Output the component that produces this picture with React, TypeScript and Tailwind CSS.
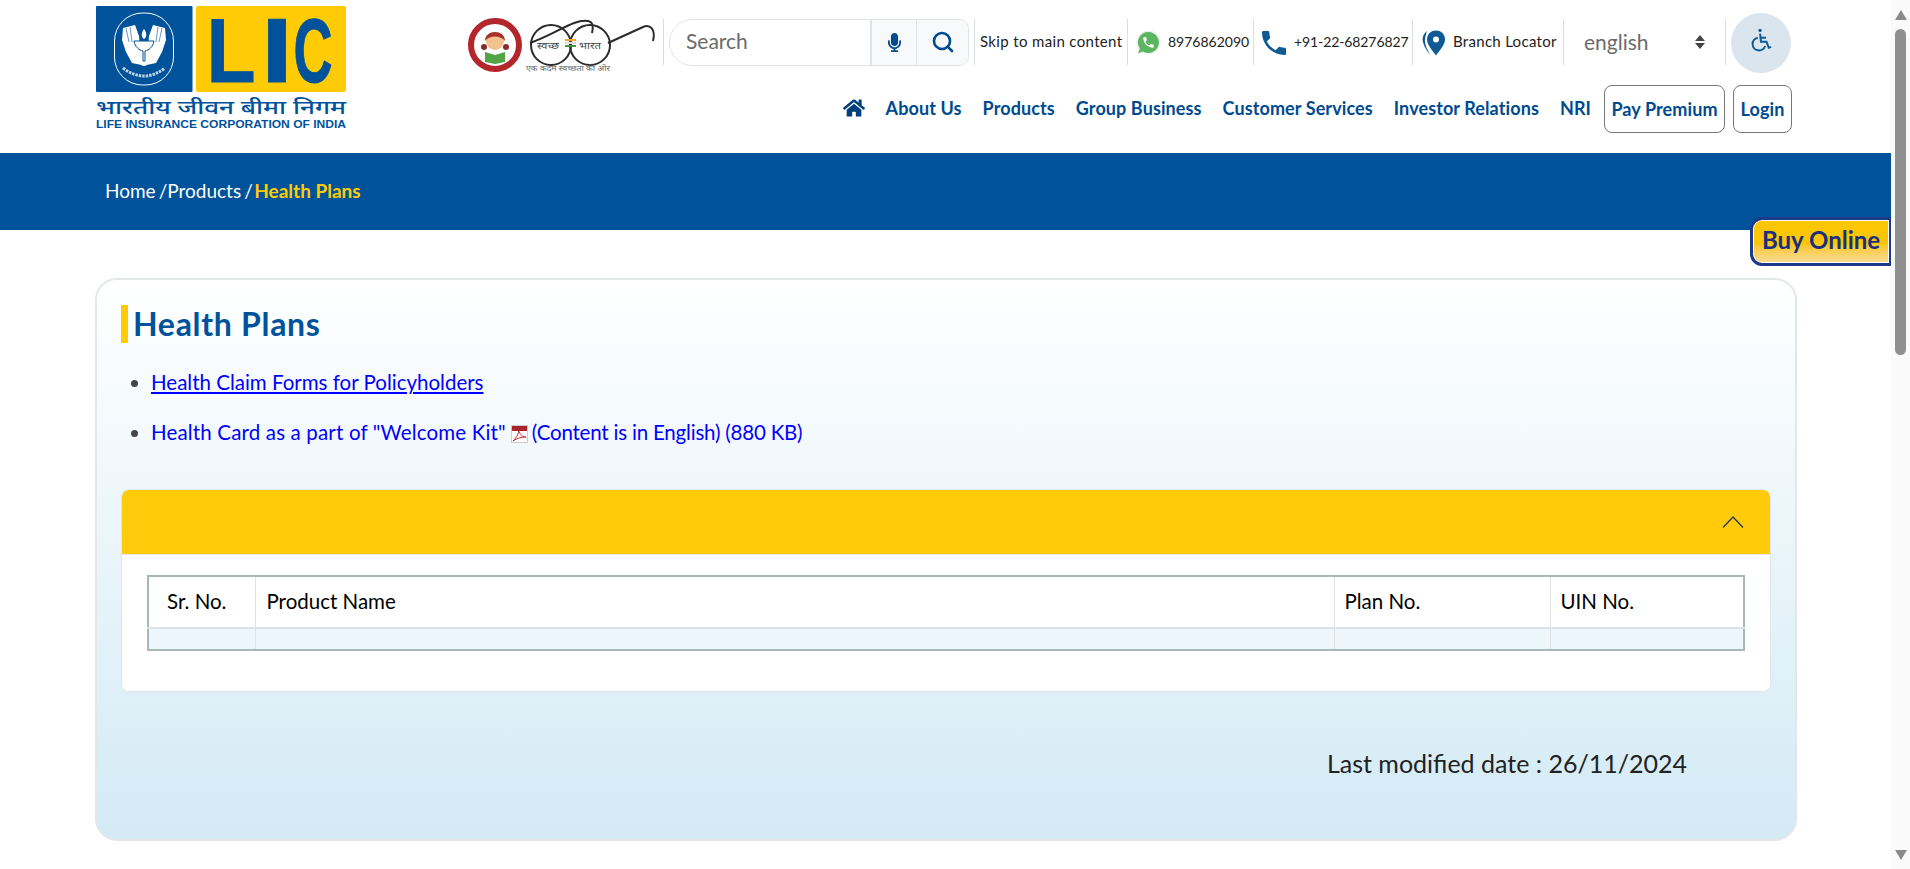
import { FaHome, FaMicrophone } from 'react-icons/fa';
import { Search } from 'lucide-react';

const FONT = "font-['Lato','Noto_Sans',sans-serif]";

const Divider = () => <div className="w-px h-[46px] mb-[2px] bg-[#dedede] shrink-0" />;

const PHONE = "M6.62 10.79c1.44 2.83 3.76 5.14 6.59 6.59l2.2-2.2c.27-.27.67-.36 1.02-.24 1.12.37 2.33.57 3.57.57.55 0 1 .45 1 1V20c0 .55-.45 1-1 1-9.39 0-17-7.61-17-17 0-.55.45-1 1-1h3.5c.55 0 1 .45 1 1 0 1.25.2 2.45.57 3.57.11.35.03.74-.25 1.02l-2.2 2.2z";

function LicLogo() {
  return (
    <svg viewBox="94 0 254 135" className="w-[254px] h-[135px] shrink-0">
      <rect x="96" y="6" width="96.500" height="86" fill="#00529b" rx="1" />
      <rect x="196" y="6" width="150" height="86" fill="#ffcb05" rx="2" />
      <rect x="114.500" y="13" width="59" height="72" rx="28" fill="none" stroke="#fff" strokeWidth="1" />
      <path d="M122 40 L123 28 L135 25 L139 36 L140 47 L148 57 L146 66 L132 63 L126 52 Z" fill="#fff" />
      <path d="M166 40 L165 28 L153 25 L149 36 L148 47 L140 57 L142 66 L156 63 L162 52 Z" fill="#fff" />
      <path d="M126 28 L129 42 M130 27 L132 42 M162 28 L159 42 M158 27 L156 42" stroke="#00529b" strokeWidth="0.6" fill="none" />
      <path d="M144 29 C147 33 147 37 144 39 C141 37 141 33 144 29 Z" fill="#fff" />
      <path d="M134 41 H154 C153 47 149 50 145 51 V61 H143 V51 C139 50 135 47 134 41 Z" fill="#fff" stroke="#00529b" strokeWidth="1" />
      <path d="M123 68 Q144 84 165 68" fill="none" stroke="#fff" strokeWidth="3" strokeDasharray="2.500 1" opacity="0.75" />
      <text x="206.500" y="82" fontFamily="Liberation Sans" fontWeight="700" fontSize="91" fill="#00529b" stroke="#00529b" strokeWidth="1" textLength="49" lengthAdjust="spacingAndGlyphs">L</text>
      <text x="261" y="82" fontFamily="Liberation Sans" fontWeight="700" fontSize="91" fill="#00529b" stroke="#00529b" strokeWidth="1" textLength="32" lengthAdjust="spacingAndGlyphs">I</text>
      <text x="293.500" y="82" fontFamily="Liberation Sans" fontWeight="700" fontSize="91" fill="#00529b" stroke="#00529b" strokeWidth="1" textLength="39" lengthAdjust="spacingAndGlyphs">C</text>
      <text x="96" y="114" fontFamily="Noto Sans, sans-serif" fontWeight="500" fontSize="19" fill="#00529b" textLength="250" lengthAdjust="spacingAndGlyphs">भारतीय जीवन बीमा निगम</text>
      <text x="96" y="127.500" fontFamily="Liberation Sans" fontWeight="700" fontSize="10.500" fill="#00529b" textLength="250" lengthAdjust="spacingAndGlyphs">LIFE INSURANCE CORPORATION OF INDIA</text>
    </svg>
  );
}

function SwachhLogo() {
  return (
    <svg viewBox="465 5 200 70" className="w-[200px] h-[70px] shrink-0">
      <circle cx="497" cy="42" r="24" fill="#fff" stroke="#b3262b" strokeWidth="6" />
      <circle cx="497" cy="38" r="9" fill="#f3c18e" />
      <path d="M487 38 C487 26 507 26 507 38 C503 32 491 32 487 38 Z" fill="#a8322a" />
      <circle cx="486" cy="44" r="3" fill="#8a2c2c" />
      <circle cx="508" cy="44" r="3" fill="#8a2c2c" />
      <path d="M487 49 L497 52 L507 49 V59 L497 61 L487 59 Z" fill="#52a447" />
      <circle cx="553" cy="42" r="20" fill="none" stroke="#2b2b2b" strokeWidth="2" />
      <circle cx="592" cy="42" r="20" fill="none" stroke="#2b2b2b" strokeWidth="2" />
      <path d="M532 40 C560 30 575 16 590 18 C596 19 595 26 594 30" fill="none" stroke="#2b2b2b" strokeWidth="2" />
      <path d="M610 40 L645 24 C652 21 658 26 655 38" fill="none" stroke="#2b2b2b" strokeWidth="2" />
      <rect x="567" y="36" width="11" height="2" fill="#f4a62a" />
      <rect x="567" y="39" width="11" height="2" fill="#ddd" />
      <rect x="567" y="42" width="11" height="2" fill="#3f9a3f" />
      <text x="539" y="46" fontFamily="Noto Sans, sans-serif" fontSize="9" fill="#444" textLength="22" lengthAdjust="spacingAndGlyphs">स्वच्छ</text>
      <text x="581" y="46" fontFamily="Noto Sans, sans-serif" fontSize="9" fill="#444" textLength="22" lengthAdjust="spacingAndGlyphs">भारत</text>
      <text x="528" y="68" fontFamily="Noto Sans, sans-serif" fontSize="7.500" fill="#666" textLength="84" lengthAdjust="spacingAndGlyphs">एक कदम स्वच्छता की ओर</text>
    </svg>
  );
}

function WhatsAppIcon() {
  return (
    <svg viewBox="0 0 26 26" className="w-[26px] h-[26px] shrink-0">
      <circle cx="13.500" cy="12.500" r="12" fill="#efefef" />
      <path d="M13.500 2 A10.500 10.500 0 1 1 8 21.500 L3 23.500 L4.800 18.500 A10.500 10.500 0 0 1 13.500 2 Z" fill="#5eb55f" />
      <path d={PHONE} fill="#fff" transform="translate(6.500 5.500) scale(0.58)" />
    </svg>
  );
}

function PinIcon() {
  return (
    <svg viewBox="0 0 23 26" className="w-[23px] h-[26px] shrink-0">
      <path d="M5 1 C1 4 0 8 1 12 C2 17 6 22 8 25 C5 19 3 15 3 11 C3 7 4 4 5 1 Z" fill="#0f5a94" />
      <path d="M14 0.500 C8 0.500 5 5 5 9.500 C5 15 11 21 14 25.500 C17 21 23 15 23 9.500 C23 5 20 0.500 14 0.500 Z" fill="#0f5a94" />
      <circle cx="14" cy="9.500" r="3" fill="#fff" />
    </svg>
  );
}

function WheelchairIcon() {
  return (
    <svg viewBox="0 0 24 26" className="w-[22px] h-[24px]" fill="none" stroke="#0f5a94" strokeWidth="2.200">
      <circle cx="11" cy="2.500" r="1.800" fill="#0f5a94" stroke="none" />
      <path d="M11 6 L12 15 H18 L20.500 21.500 L23 20.500" />
      <path d="M12 10.500 H17.500" />
      <path d="M8.500 10.500 A7 7 0 1 0 16.500 19.500" />
    </svg>
  );
}

function PdfIcon() {
  return (
    <svg viewBox="0 0 17 18" className="w-[17px] h-[18px] inline-block align-[-3px] ml-[5px] mr-[4px]">
      <rect x="0.500" y="0.500" width="16" height="17" fill="#fff" stroke="#ccc" />
      <rect x="1" y="1" width="15" height="5" fill="#a8242a" />
      <path d="M2 16 C6 12 8 8 7.500 5 C9 10 12 12 15 12 C11 12 6 13 2 16 Z" fill="none" stroke="#c8282e" strokeWidth="1" />
    </svg>
  );
}

function Scrollbar() {
  return (
    <div className="w-[19px] shrink-0 h-full bg-[#fafafa] flex flex-col items-center">
      <div className="mt-[10px] w-0 h-0 border-x-[6px] border-x-transparent border-b-[10px] border-b-[#8a8a8a]" />
      <div className="mt-[9px] w-[11px] h-[326px] rounded-full bg-[#8f8f8f]" />
      <div className="mt-auto mb-[9px] w-0 h-0 border-x-[6px] border-x-transparent border-t-[10px] border-t-[#8a8a8a]" />
    </div>
  );
}

function TopRow() {
  return (
    <div className="mt-[13px] h-[60px] flex items-center justify-end">
      <SwachhLogo />
      <Divider />
      <div className="ml-[5px] mb-[2px] w-[300px] h-[47px] flex border border-[#dfe3e8] rounded-l-[24px] rounded-r-[10px] overflow-hidden">
        <div className="flex-1 pl-[16px] pb-[2px] flex items-center text-[21px] text-[#6b6b6b]">Search</div>
        <div className="w-[46px] border-l-2 border-[#dfe3e8] bg-[#f8f9fa] flex items-center justify-center text-[#004a8f]">
          <FaMicrophone size={19} />
        </div>
        <div className="w-[52px] border-l border-[#dfe3e8] bg-[#f8f9fa] flex items-center justify-center text-[#004a8f]">
          <Search size={24} strokeWidth={2.6} />
        </div>
      </div>
      <div className="ml-[5px]"><Divider /></div>
      <div className="w-[152px] pl-[5px] pb-[3px] text-[15px] text-[#222] tracking-[0.35px] whitespace-nowrap">Skip to main content</div>
      <Divider />
      <div className="w-[125px] pl-[7px] flex items-center gap-[7px] text-[14px] text-[#222]">
        <WhatsAppIcon />
        <span className="pb-[3px]">8976862090</span>
      </div>
      <Divider />
      <div className="w-[158px] pl-[8px] flex items-center gap-[8px] text-[14px] text-[#222] tracking-[-0.1px] whitespace-nowrap">
        <svg viewBox="3 3 18 18" className="w-[24px] h-[24px] shrink-0"><path d={PHONE} fill="#0f5a94" /></svg>
        <span className="pb-[3px]">+91-22-68276827</span>
      </div>
      <Divider />
      <div className="w-[150px] pl-[9px] flex items-center gap-[8px] text-[15px] text-[#222] tracking-[0.3px] whitespace-nowrap">
        <PinIcon />
        <span className="pb-[3px]">Branch Locator</span>
      </div>
      <Divider />
      <div className="w-[161px] pl-[20px] pr-[20px] flex items-center justify-between text-[21px] text-[#6b6b6b]">
        <span className="pb-[3px]">english</span>
        <span className="flex flex-col gap-[2px] mb-[2px]">
          <span className="w-0 h-0 border-x-[5px] border-x-transparent border-b-[6px] border-b-[#444]" />
          <span className="w-0 h-0 border-x-[5px] border-x-transparent border-t-[6px] border-t-[#444]" />
        </span>
      </div>
      <Divider />
      <div className="ml-[5px] w-[60px] h-[60px] rounded-full bg-[#dbe5ee] flex items-center justify-center pb-[7px]">
        <WheelchairIcon />
      </div>
    </div>
  );
}

function NavRow() {
  const items = ['About Us', 'Products', 'Group Business', 'Customer Services', 'Investor Relations', 'NRI'];
  return (
    <div className="mt-[12px] h-[48px] flex items-center justify-end gap-[21px] text-[18px] font-bold text-[#004a8f] tracking-[0.1px]">
      <FaHome size={22} className="text-[#003f7d] mb-[2px]" />
      {items.map((item) => (
        <span key={item} className="whitespace-nowrap pb-[2px]">{item}</span>
      ))}
      <div className="-ml-[8px] -mr-[1px] flex gap-[8px]">
        <div className="w-[121px] h-[48px] border border-[#777] rounded-[8px] flex items-center justify-center">Pay Premium</div>
        <div className="w-[59px] h-[48px] border border-[#777] rounded-[8px] flex items-center justify-center">Login</div>
      </div>
    </div>
  );
}

export default function App() {
  return (
    <div className={`flex h-[869px] overflow-hidden bg-white ${FONT}`}>
      <div className="relative flex-1 min-w-0">
        <header className="h-[153px] flex justify-between pl-[94px] pr-[100px]">
          <LicLogo />
          <div>
            <TopRow />
            <NavRow />
          </div>
        </header>

        <div className="h-[77px] bg-[#00529b] flex items-center pl-[105px] text-[19px] text-white">
          <span>Home</span>
          <span className="ml-[3px]">/</span>
          <span>Products</span>
          <span className="ml-[3px] mr-[1.5px]">/</span>
          <span className="font-bold text-[#ffcb05]">Health Plans</span>
        </div>

        <div className="absolute right-0 top-[217px] w-[141px] h-[49px] border-[3px] border-r-2 border-[#1c3a8a] rounded-l-[12px] bg-gradient-to-b from-[#fcc506] from-55% to-[#f8dc90] shadow-[inset_0_0_0_1px_#fff] flex items-center justify-center pb-[3px] text-[24px] font-bold text-[#1b2f7c]">
          Buy Online
        </div>

        <main className="ml-[95px] mr-[94px] mt-[48px] h-[563px] border-2 border-[#e4e7e9] rounded-[22px] bg-gradient-to-b from-white to-[#d3eaf5] pt-[25px] pl-[24px] pr-[24px]">
          <h1 className="h-[38px] border-l-[7px] border-[#ffcb05] pl-[5px] flex items-center text-[32px] tracking-[0.7px] font-bold text-[#00529b]">Health Plans</h1>

          <ul className="mt-[24px] list-disc pl-[30px] flex flex-col gap-[20px] text-[20.500px] leading-[30px] text-[#0000ff] marker:text-[#444]">
            <li><a className="underline">Health Claim Forms for Policyholders</a></li>
            <li>
              <span className="tracking-[0.16px]">Health Card as a part of "Welcome Kit"</span>
              <PdfIcon />
              <span className="tracking-[-0.2px]">(Content is in English) (880 KB)</span>
            </li>
          </ul>

          <section className="mt-[42px] h-[203px] rounded-[8px] border border-[#dfe7ec] bg-white overflow-hidden">
            <div className="h-[65px] bg-[#ffcb0a] flex items-center justify-end pr-[26px] border-b border-[#e6e6e6]">
              <svg viewBox="0 0 22 12" className="w-[22px] h-[12px]" fill="none" stroke="#23384d" strokeWidth="1.300"><path d="M1 11.500 L11 1 L21 11.500" /></svg>
            </div>
            <div className="pt-[20px] px-[25px]">
              <table className="w-[1598px] table-fixed border-collapse border-2 border-[#a8b8b4] text-[20.500px] text-black">
                <colgroup>
                  <col className="w-[107px]" />
                  <col className="w-[1079px]" />
                  <col className="w-[216px]" />
                  <col />
                </colgroup>
                <tbody>
                  <tr className="h-[52px] border-b-2 border-[#dee2e6]">
                    <td className="pl-[18px] pb-[1px] border-r border-[#dee2e6]">Sr. No.</td>
                    <td className="pl-[11px] pb-[1px] border-r border-[#dee2e6]">Product Name</td>
                    <td className="pl-[10px] pb-[1px] border-r border-[#dee2e6]">Plan No.</td>
                    <td className="pl-[10px] pb-[1px]">UIN No.</td>
                  </tr>
                  <tr className="h-[22px] bg-[#eef6fd]">
                    <td className="border-r border-[#dee2e6]" />
                    <td className="border-r border-[#dee2e6]" />
                    <td className="border-r border-[#dee2e6]" />
                    <td />
                  </tr>
                </tbody>
              </table>
            </div>
          </section>

          <div className="mt-[54px] pr-[84px] flex justify-end text-[25px] leading-[34px] text-[#222]">Last modified date : 26/11/2024</div>
        </main>
      </div>
      <Scrollbar />
    </div>
  );
}
